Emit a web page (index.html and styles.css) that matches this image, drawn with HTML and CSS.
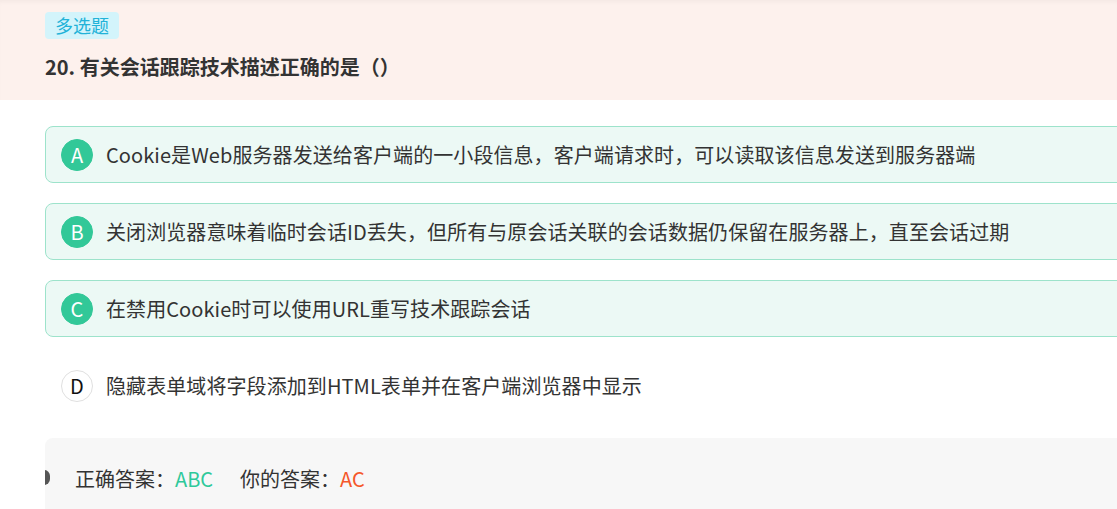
FILE: index.html
```html
<!DOCTYPE html>
<html lang="zh-CN">
<head>
<meta charset="utf-8">
<link rel="stylesheet" href="styles.css">
</head>
<body>
<div class="page">
  <header class="head">
    <span class="tag">多选题</span>
    <h1 class="title">20. 有关会话跟踪技术描述正确的是（）</h1>
  </header>
  <div class="options">
    <div class="opt sel"><span class="dot">A</span><span class="txt">Cookie是Web服务器发送给客户端的一小段信息，客户端请求时，可以读取该信息发送到服务器端</span></div>
    <div class="opt sel"><span class="dot">B</span><span class="txt">关闭浏览器意味着临时会话ID丢失，但所有与原会话关联的会话数据仍保留在服务器上，直至会话过期</span></div>
    <div class="opt sel"><span class="dot">C</span><span class="txt">在禁用Cookie时可以使用URL重写技术跟踪会话</span></div>
    <div class="opt"><span class="dot">D</span><span class="txt">隐藏表单域将字段添加到HTML表单并在客户端浏览器中显示</span></div>
  </div>
  <div class="answer">
    <span class="mark"></span>
    <span class="lbl">正确答案：</span><span class="ok">ABC</span>
    <span class="lbl you">你的答案：</span><span class="bad">AC</span>
  </div>
</div>
</body>
</html>
```
FILE: styles.css
```css
html, body {
  margin: 0;
  padding: 0;
  background: #fff;
  overflow: hidden;
}
body {
  font-family: "Noto Sans CJK SC", "Microsoft YaHei", sans-serif;
  color: #333;
  width: 1117px;
  height: 509px;
}
.page {
  width: 1117px;
}
.head {
  background: #fdf1ed;
  box-shadow: inset 0 4px 4px -2px rgba(0,0,0,0.04);
  padding: 12px 0 0 45px;
  height: 88px;
}
.tag {
  display: inline-block;
  height: 27px;
  line-height: 27px;
  padding: 0 10px;
  background: #d3f4fb;
  color: #22b2d8;
  font-size: 18px;
  border-radius: 4px;
}
.title {
  margin: 8px 0 0;
  font-size: 20px;
  font-weight: bold;
  color: #333;
  line-height: 40px;
}
.options {
  padding: 26px 0 0 45px;
  display: flex;
  flex-direction: column;
  gap: 20px;
}
.opt {
  display: flex;
  align-items: center;
  gap: 13px;
  height: 55px;
  width: 1100px;
  padding-left: 15px;
  border: 1px solid transparent;
  border-radius: 8px;
  font-size: 20px;
  letter-spacing: 0.08px;
  color: #333;
}
.opt.sel {
  background: #ecf9f5;
  border-color: #9de3cb;
}
.dot {
  width: 30px;
  height: 30px;
  flex: none;
  border-radius: 50%;
  border: 1px solid #e0e0e0;
  display: flex;
  align-items: center;
  justify-content: center;
  font-size: 20px;
  letter-spacing: 0;
  color: #111;
  background: #fff;
}
.sel .dot {
  background: #32c898;
  border-color: #32c898;
  color: #fff;
}
.answer {
  position: relative;
  margin: 24px 0 0 45px;
  height: 80px;
  background: #f7f7f7;
  border-radius: 8px 0 0 0;
  display: flex;
  align-items: center;
  padding-left: 30px;
  font-size: 20px;
  color: #333;
  overflow: hidden;
}
.mark {
  position: absolute;
  left: -8px;
  top: 32px;
  width: 13px;
  height: 15px;
  border-radius: 6px;
  background: #555;
}
.ok { color: #2ec99a; }
.bad { color: #f5572a; }
.you { margin-left: 27px; }
```
